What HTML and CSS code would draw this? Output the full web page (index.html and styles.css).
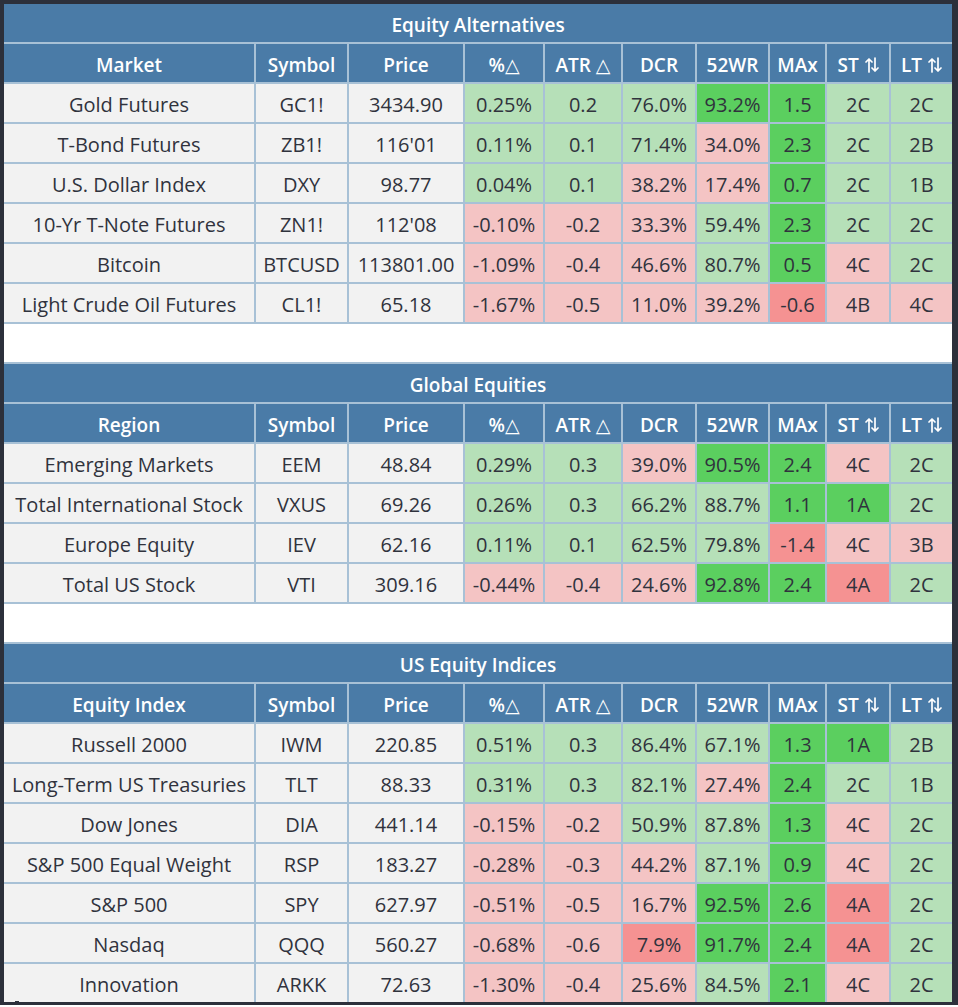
FILE: index.html
```html
<!DOCTYPE html>
<html lang="en">
<head>
<meta charset="utf-8">
<title>Market Tables</title>
<link rel="stylesheet" href="styles.css">
</head>
<body>
<div class="frame">
<table class="mkt">
<colgroup>
<col class="c1"><col class="c2"><col class="c3"><col class="c4"><col class="c5"><col class="c6"><col class="c7"><col class="c8"><col class="c9"><col class="c10">
</colgroup>
<tbody>
<tr class="title"><td colspan="10">Equity Alternatives</td></tr>
<tr class="head"><td>Market</td><td>Symbol</td><td>Price</td><td>%△</td><td>ATR △</td><td>DCR</td><td>52WR</td><td>MAx</td><td>ST <svg class="ud" viewBox="0 0 14 16"><path d="M4 15V2M1 5l3-3 3 3M10 1v13M7 11l3 3 3-3"/></svg></td><td>LT <svg class="ud" viewBox="0 0 14 16"><path d="M4 15V2M1 5l3-3 3 3M10 1v13M7 11l3 3 3-3"/></svg></td></tr>
<tr><td>Gold Futures</td><td>GC1!</td><td>3434.90</td><td class="g">0.25%</td><td class="g">0.2</td><td class="g">76.0%</td><td class="G">93.2%</td><td class="G">1.5</td><td class="g">2C</td><td class="g">2C</td></tr>
<tr><td>T-Bond Futures</td><td>ZB1!</td><td>116'01</td><td class="g">0.11%</td><td class="g">0.1</td><td class="g">71.4%</td><td class="p">34.0%</td><td class="G">2.3</td><td class="g">2C</td><td class="g">2B</td></tr>
<tr><td>U.S. Dollar Index</td><td>DXY</td><td>98.77</td><td class="g">0.04%</td><td class="g">0.1</td><td class="p">38.2%</td><td class="p">17.4%</td><td class="G">0.7</td><td class="g">2C</td><td class="g">1B</td></tr>
<tr><td>10-Yr T-Note Futures</td><td>ZN1!</td><td>112'08</td><td class="p">-0.10%</td><td class="p">-0.2</td><td class="p">33.3%</td><td class="g">59.4%</td><td class="G">2.3</td><td class="g">2C</td><td class="g">2C</td></tr>
<tr><td>Bitcoin</td><td>BTCUSD</td><td>113801.00</td><td class="p">-1.09%</td><td class="p">-0.4</td><td class="p">46.6%</td><td class="g">80.7%</td><td class="G">0.5</td><td class="p">4C</td><td class="g">2C</td></tr>
<tr><td>Light Crude Oil Futures</td><td>CL1!</td><td>65.18</td><td class="p">-1.67%</td><td class="p">-0.5</td><td class="p">11.0%</td><td class="p">39.2%</td><td class="R">-0.6</td><td class="p">4B</td><td class="p">4C</td></tr>
<tr class="gap"><td colspan="10"></td></tr>
<tr class="title"><td colspan="10">Global Equities</td></tr>
<tr class="head"><td>Region</td><td>Symbol</td><td>Price</td><td>%△</td><td>ATR △</td><td>DCR</td><td>52WR</td><td>MAx</td><td>ST <svg class="ud" viewBox="0 0 14 16"><path d="M4 15V2M1 5l3-3 3 3M10 1v13M7 11l3 3 3-3"/></svg></td><td>LT <svg class="ud" viewBox="0 0 14 16"><path d="M4 15V2M1 5l3-3 3 3M10 1v13M7 11l3 3 3-3"/></svg></td></tr>
<tr><td>Emerging Markets</td><td>EEM</td><td>48.84</td><td class="g">0.29%</td><td class="g">0.3</td><td class="p">39.0%</td><td class="G">90.5%</td><td class="G">2.4</td><td class="p">4C</td><td class="g">2C</td></tr>
<tr><td>Total International Stock</td><td>VXUS</td><td>69.26</td><td class="g">0.26%</td><td class="g">0.3</td><td class="g">66.2%</td><td class="g">88.7%</td><td class="G">1.1</td><td class="G">1A</td><td class="g">2C</td></tr>
<tr><td>Europe Equity</td><td>IEV</td><td>62.16</td><td class="g">0.11%</td><td class="g">0.1</td><td class="g">62.5%</td><td class="g">79.8%</td><td class="R">-1.4</td><td class="p">4C</td><td class="p">3B</td></tr>
<tr><td>Total US Stock</td><td>VTI</td><td>309.16</td><td class="p">-0.44%</td><td class="p">-0.4</td><td class="p">24.6%</td><td class="G">92.8%</td><td class="G">2.4</td><td class="R">4A</td><td class="g">2C</td></tr>
<tr class="gap"><td colspan="10"></td></tr>
<tr class="title"><td colspan="10">US Equity Indices</td></tr>
<tr class="head"><td>Equity Index</td><td>Symbol</td><td>Price</td><td>%△</td><td>ATR △</td><td>DCR</td><td>52WR</td><td>MAx</td><td>ST <svg class="ud" viewBox="0 0 14 16"><path d="M4 15V2M1 5l3-3 3 3M10 1v13M7 11l3 3 3-3"/></svg></td><td>LT <svg class="ud" viewBox="0 0 14 16"><path d="M4 15V2M1 5l3-3 3 3M10 1v13M7 11l3 3 3-3"/></svg></td></tr>
<tr><td>Russell 2000</td><td>IWM</td><td>220.85</td><td class="g">0.51%</td><td class="g">0.3</td><td class="g">86.4%</td><td class="g">67.1%</td><td class="G">1.3</td><td class="G">1A</td><td class="g">2B</td></tr>
<tr><td>Long-Term US Treasuries</td><td>TLT</td><td>88.33</td><td class="g">0.31%</td><td class="g">0.3</td><td class="g">82.1%</td><td class="p">27.4%</td><td class="G">2.4</td><td class="g">2C</td><td class="g">1B</td></tr>
<tr><td>Dow Jones</td><td>DIA</td><td>441.14</td><td class="p">-0.15%</td><td class="p">-0.2</td><td class="g">50.9%</td><td class="g">87.8%</td><td class="G">1.3</td><td class="p">4C</td><td class="g">2C</td></tr>
<tr><td>S&amp;P 500 Equal Weight</td><td>RSP</td><td>183.27</td><td class="p">-0.28%</td><td class="p">-0.3</td><td class="p">44.2%</td><td class="g">87.1%</td><td class="G">0.9</td><td class="p">4C</td><td class="g">2C</td></tr>
<tr><td>S&amp;P 500</td><td>SPY</td><td>627.97</td><td class="p">-0.51%</td><td class="p">-0.5</td><td class="p">16.7%</td><td class="G">92.5%</td><td class="G">2.6</td><td class="R">4A</td><td class="g">2C</td></tr>
<tr><td>Nasdaq</td><td>QQQ</td><td>560.27</td><td class="p">-0.68%</td><td class="p">-0.6</td><td class="R">7.9%</td><td class="G">91.7%</td><td class="G">2.4</td><td class="R">4A</td><td class="g">2C</td></tr>
<tr class="last"><td>Innovation</td><td>ARKK</td><td>72.63</td><td class="p">-1.30%</td><td class="p">-0.4</td><td class="p">25.6%</td><td class="g">84.5%</td><td class="G">2.1</td><td class="p">4C</td><td class="g">2C</td></tr>
</tbody>
</table>
<span class="notch"></span>
</div>
</body>
</html>
```

FILE: styles.css
```css
html, body {
  margin: 0;
  padding: 0;
  background: #ffffff;
}

body {
  font-family: "Open Sans", "DejaVu Sans", sans-serif;
  color: #30333d;
}

.frame {
  position: relative;
  width: 948px;
  border-style: solid;
  border-color: #2c303b;
  border-width: 4px 6px 3px 4px;
}

.mkt {
  width: 948px;
  table-layout: fixed;
  border-collapse: separate;
  border-spacing: 0;
}

.c1 { width: 252px; }
.c2 { width: 93px; }
.c3 { width: 116px; }
.c4 { width: 80px; }
.c5 { width: 78px; }
.c6 { width: 74px; }
.c7 { width: 73px; }
.c8 { width: 57px; }
.c9 { width: 64px; }
.c10 { width: 61px; }

.mkt td {
  height: 36px;
  padding: 2px 0 0;
  text-align: center;
  vertical-align: middle;
  white-space: nowrap;
  overflow: hidden;
  font-size: 20px;
  background: #f2f2f2;
  border-right: 2px solid #a8c1d6;
  border-bottom: 2px solid #a8c1d6;
  box-sizing: content-box;
}

.mkt td:last-child {
  border-right: 0;
}

.mkt tr.last td {
  border-bottom: 0;
}

.mkt tr.title td,
.mkt tr.head td {
  height: 35px;
  padding-top: 3px;
  background: #4a7ba7;
  color: #ffffff;
  font-weight: 600;
  font-size: 19px;
}

.mkt tr.gap td {
  background: #ffffff;
}

.mkt td.g { background: #b6e0b8; }
.mkt td.G { background: #5bcf5f; }
.mkt td.p { background: #f4c4c4; }
.mkt td.R { background: #f59292; }

.ud {
  width: 14px;
  height: 16px;
  vertical-align: -1px;
  margin-left: 1px;
  fill: none;
  stroke: #ffffff;
  stroke-width: 1.7;
  stroke-linecap: round;
  stroke-linejoin: round;
}

.notch {
  position: absolute;
  left: 11px;
  bottom: -1px;
  width: 4px;
  height: 2px;
  background: #2c303b;
}
```
